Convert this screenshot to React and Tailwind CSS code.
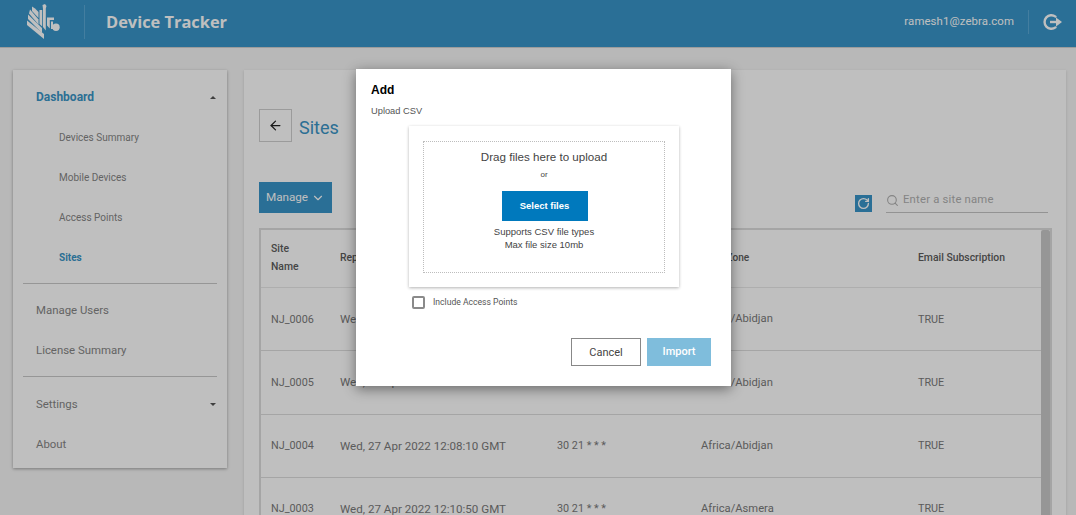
import React from "react";
import { ArrowLeft, ChevronDown, RotateCw, Search } from "lucide-react";

function Logo() {
  return (
    <svg width="34" height="36" viewBox="0 0 34 36" className="shrink-0" fill="#ffffff">
      <polygon points="0,16.5 0,21 17,35 17,30" />
      <polygon points="1,10.5 1,15 15,29 15,24" />
      <polygon points="3,5.5 2,9.5 11.5,20.5 11.5,15.5" />
      <polygon points="5,2.5 8,4.5 11.5,8 11.5,14 5,7" />
      <polygon points="12.5,6 15.2,6 15.2,22.5 12.5,20" />
      <polygon points="15.5,1 18,0 19.5,2 18.8,4.5 18.8,26.5 16,23 16,5" />
      <polygon points="20,13.5 27,13.5 27,16 22.8,16 22.8,24.5 20,21.5" />
      <polygon points="24,17.5 26,17.5 26,25 24,25" />
      <circle cx="29" cy="23.3" r="3.7" />
    </svg>
  );
}

function SignOut() {
  return (
    <svg width="20" height="18" viewBox="0 0 20 18" fill="none" className="ml-[14px] mr-[13px] shrink-0">
      <path d="M12.5 3.6 A6.8 6.8 0 1 0 12.5 14.4" stroke="#ffffff" strokeWidth="2.4" strokeLinecap="round" />
      <path d="M7 9 H14" stroke="#ffffff" strokeWidth="2.4" />
      <polygon points="13,4.6 19,9 13,13.4" fill="#ffffff" />
    </svg>
  );
}

const items = [
  { name: "NJ_0006", date: "Wed, 27 Apr 2022 12:00:10 GMT", cron: "30 21 * * *", zone: "Africa/Abidjan" },
  { name: "NJ_0005", date: "Wed, 27 Apr 2022 12:04:30 GMT", cron: "30 21 * * *", zone: "Africa/Abidjan" },
  { name: "NJ_0004", date: "Wed, 27 Apr 2022 12:08:10 GMT", cron: "30 21 * * *", zone: "Africa/Abidjan" },
  { name: "NJ_0003", date: "Wed, 27 Apr 2022 12:10:50 GMT", cron: "30 21 * * *", zone: "Africa/Asmera" },
];

function Caret({ up }) {
  return (
    <span
      className={
        up
          ? "h-0 w-0 border-x-[3px] border-b-[3px] border-x-transparent border-b-[#555555]"
          : "h-0 w-0 border-x-[3px] border-t-[3px] border-x-transparent border-t-[#555555]"
      }
    />
  );
}

function Sidebar() {
  return (
    <aside className="w-[214px] h-[398px] shrink-0 bg-white shadow-[0_1px_3px_rgba(0,0,0,0.35)] pt-[7px] text-[11.4px] text-[#858585]">
      <div className="h-[40px] pl-[23px] pr-[11px] flex items-center justify-between">
        <span className="text-[12px] font-bold text-[#3a94c6]">Dashboard</span>
        <Caret up />
      </div>
      {["Devices Summary", "Mobile Devices", "Access Points"].map((t) => (
        <div key={t} className="h-[40.3px] pl-[46px] flex items-center text-[10px]">{t}</div>
      ))}
      <div className="h-[40px] pl-[46px] flex items-center text-[10px] font-bold text-[#3a94c6]">Sites</div>
      <div className="mx-[10px] mt-[5px] border-t border-[#c9c9c9]" />
      <div className="h-[41px] mt-[6px] pl-[23px] flex items-center">Manage Users</div>
      <div className="h-[40px] pl-[23px] flex items-center">License Summary</div>
      <div className="mx-[10px] mt-[5px] border-t border-[#c9c9c9]" />
      <div className="h-[41px] mt-[7px] pl-[23px] pr-[11px] flex items-center justify-between">
        <span>Settings</span>
        <Caret />
      </div>
      <div className="h-[40px] pl-[23px] flex items-center">About</div>
    </aside>
  );
}

function Table() {
  return (
    <div className="relative mt-[15px] h-[400px] border-l-2 border-t-2 border-r-2 border-[#dcdcdc] overflow-hidden">
      <div className="absolute right-0 top-0 bottom-0 w-[9px] rounded-[2px] bg-[#c8c8c8]" />
      <div className="h-[58px] pb-[2px] flex items-center border-b border-[#e8e8e8] text-[10.4px] font-medium text-[#5c5c5c]">
        <div className="w-[79px] pl-[10px] leading-[18px]">Site<br />Name</div>
        <div className="w-[217px]">Report Time</div>
        <div className="w-[144px]">Cron</div>
        <div className="w-[217px] text-[10.1px]">Time Zone</div>
        <div>Email Subscription</div>
      </div>
      {items.map((r) => (
        <div key={r.name} className="h-[63.3px] pt-[1px] flex items-center border-b border-[#dddddd] text-[10.8px] text-[#7a7a7a]">
          <div className="w-[79px] pl-[10px]">{r.name}</div>
          <div className="w-[217px] text-[11.6px]">{r.date}</div>
          <div className="w-[144px]">{r.cron}</div>
          <div className="w-[217px] text-[11.2px]">{r.zone}</div>
          <div>TRUE</div>
        </div>
      ))}
    </div>
  );
}

function Modal() {
  return (
    <div className="absolute left-[356px] top-[69px] w-[375px] h-[317px] bg-white shadow-[0_3px_12px_rgba(0,0,0,0.45)] px-[15px] pt-[14px]">
      <h2 className="text-[12px] leading-[14px] font-bold text-black font-['Liberation_Sans',sans-serif]">Add</h2>
      <p className="mt-[7px] text-[9.3px] leading-[14px] text-[#555555] font-['Liberation_Sans',sans-serif]">Upload CSV</p>
      <div className="ml-[38px] mt-[8px] w-[270px] h-[161px] bg-white shadow-[0_1px_3px_rgba(0,0,0,0.3)] p-[14px] pt-[15px] font-['Liberation_Sans',sans-serif]">
        <div className="h-[132px] border border-dotted border-[#bdbdbd] flex flex-col items-center pt-[8px] text-[#444444]">
          <div className="text-[11.6px] leading-[14px]">Drag files here to upload</div>
          <div className="mt-[6px] text-[8px] leading-[10px]">or</div>
          <button className="mt-[11px] ml-[1px] w-[86px] h-[30px] pt-[1px] bg-[#0079bd] text-white text-[9.5px] font-bold">Select files</button>
          <div className="mt-[4px] text-[9.5px] leading-[13px] text-center">Supports CSV file types<br />Max file size 10mb</div>
        </div>
      </div>
      <div className="ml-[41px] mt-[9px] flex items-center gap-[8px]">
        <span className="w-[13px] h-[13px] rounded-[2px] border-2 border-[#8a8a8a]" />
        <span className="text-[8.6px] text-[#555555] font-['Roboto',sans-serif]">Include Access Points</span>
      </div>
      <div className="mt-[29px] flex justify-end gap-[6px] pr-[5px] font-['Roboto',sans-serif]">
        <button className="w-[70px] h-[28px] pt-[2px] border border-[#888888] bg-white text-[11px] text-[#444444]">Cancel</button>
        <button className="w-[64px] h-[28px] bg-[#7fbddc] text-[11px] font-medium text-white">Import</button>
      </div>
    </div>
  );
}

export default function App() {
  return (
    <div className="relative h-screen overflow-hidden bg-[#f6f6f6] font-['Roboto',sans-serif]">
      <header className="h-[48px] pb-[3px] bg-[#3895c9] border-b border-[#d0d0d0] flex items-center text-white">
        <div className="ml-[27px] w-[34px]"><Logo /></div>
        <div className="ml-[23px] h-[34px] border-l border-[#5aa9d6]" />
        <h1 className="ml-[21px] text-[16.4px] font-bold text-white font-['Open_Sans',sans-serif]">Device Tracker</h1>
        <div className="ml-auto text-[11.4px] tracking-[0.1px]">ramesh1@zebra.com</div>
        <div className="ml-[14px] h-[24px] border-l border-[#5aa9d6]" />
        <SignOut />
      </header>
      <div className="flex gap-[17px] pl-[13px] pr-[10px] pt-[22px]">
        <Sidebar />
        <main className="flex-1 h-[460px] bg-white shadow-[0_1px_3px_rgba(0,0,0,0.15)] pl-[15px] pr-[14px] pt-[39px]">
          <div className="flex items-center gap-[7px]">
            <button className="w-[33px] h-[33px] border border-[#cfcfcf] flex items-center justify-center text-[#222222]">
              <ArrowLeft size={15} />
            </button>
            <span className="pt-[3px] text-[18px] text-[#3a94c6]">Sites</span>
          </div>
          <div className="mt-[40px] flex items-end justify-between">
            <button className="w-[73px] h-[31px] bg-[#3895c9] text-white text-[11.7px] flex items-center justify-center gap-[3px]">
              Manage <ChevronDown size={14} />
            </button>
            <div className="flex items-end gap-[14px]">
              <span className="w-[17px] h-[17px] mb-[1px] bg-[#3895c9] flex items-center justify-center text-white">
                <RotateCw size={13} strokeWidth={2.5} />
              </span>
              <div className="w-[162px] h-[22px] pb-[3px] border-b border-[#c4c4c4] flex items-center gap-[4px] text-[#b0b0b0] text-[11.3px] tracking-[0.2px] mr-[4px]">
                <Search size={13} />
                <span>Enter a site name</span>
              </div>
            </div>
          </div>
          <Table />
        </main>
      </div>
      <div className="absolute inset-0 bg-black/25" />
      <Modal />
    </div>
  );
}
